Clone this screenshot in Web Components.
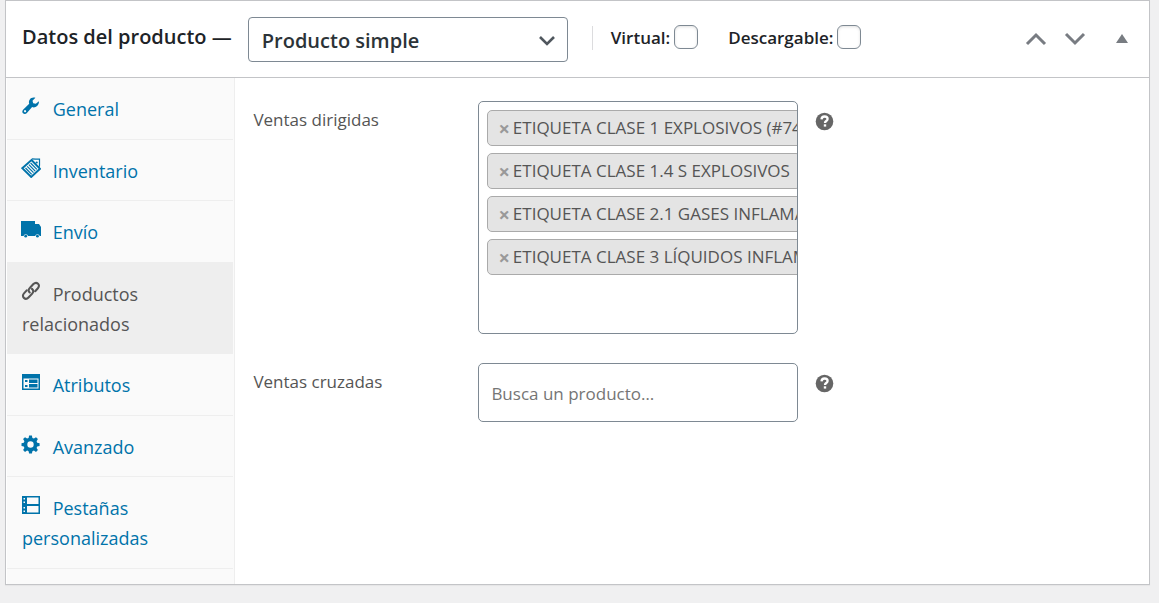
<!DOCTYPE html>
<html lang="es">
<head>
<meta charset="utf-8">
<meta name="viewport" content="width=device-width, initial-scale=1">
<title>Datos del producto</title>
<style>
    body {
        margin: 0;
        background: #f0f0f1;
        color: #1d2327;
        font-family: "Open Sans", "Noto Sans", sans-serif;
    }
</style>
</head>
<body>
<product-data>
    <product-header slot="header"></product-header>
    <product-tabs slot="tabs">
        <product-tab icon="wrench">General</product-tab>
        <product-tab icon="tag">Inventario</product-tab>
        <product-tab icon="truck">Envío</product-tab>
        <product-tab icon="link" active>Productos relacionados</product-tab>
        <product-tab icon="list">Atributos</product-tab>
        <product-tab icon="gear">Avanzado</product-tab>
        <product-tab icon="tabs">Pestañas personalizadas</product-tab>
    </product-tabs>
    <product-field label="Ventas dirigidas">
        <product-token>ETIQUETA CLASE 1 EXPLOSIVOS (#74)</product-token>
        <product-token>ETIQUETA CLASE 1.4 S EXPLOSIVOS</product-token>
        <product-token>ETIQUETA CLASE 2.1 GASES INFLAMABLES</product-token>
        <product-token>ETIQUETA CLASE 3 LÍQUIDOS INFLAMABLES</product-token>
    </product-field>
    <product-field label="Ventas cruzadas" placeholder="Busca un producto…"></product-field>
</product-data>

<script>
const icons = {
    wrench: `<path d="M17.9 5.2l-3.1 2.6-2.6-.6-.7-2.5 2.9-2.9c-2.3-.7-4.500 0-5.600 1.600-1 1.400-1.100 2.900-.6 4.300L2.300 13.400c-1.200 1.100-1.300 2.700-.3 3.800 1.100 1.100 2.800 1 3.900-.2l5.200-5.900c1.700.6 3.600.3 5-1.100 1.300-1.300 2.100-3 1.800-4.800zM4.900 15.900a1.100 1.100 0 1 1-1.500-1.600 1.100 1.100 0 0 1 1.500 1.600z" fill-rule="evenodd"/>`,
    tag: `<path d="M10.500 2L19 10.800 10.200 19 1.300 10.200z" fill="none" stroke="currentColor" stroke-width="1.900"/><path d="M4.500 10l6.200 6.300M6.200 8.300l6.300 6.400M7.900 6.600l6.300 6.500M9.600 5l6.300 6.400" stroke="currentColor" stroke-width="1.200" fill="none"/><path d="M10.800.8l3.700.4h4v6.300l-.7 2.500" fill="none" stroke="currentColor" stroke-width="1.200"/><circle cx="15.700" cy="4.500" r="1.100"/>`,
    truck: `<path d="M0 2h14v3h4l2 3v9h-1.300a2.300 2.300 0 0 0-4.500 0H7a2.300 2.300 0 0 0-4.500 0H0z"/><circle cx="4.700" cy="17.200" r="1.400"/><circle cx="16.400" cy="17.200" r="1.400"/>`,
    link: `<g fill="none" stroke="currentColor" stroke-width="2.100" stroke-linecap="round"><path d="M8.700 11.500c-1.700-1.500-1.200-3.300.1-4.600l3.600-3.800c3.200-3.100 7.600.8 4.500 4.100l-2.700 3"/><path d="M11 7.900c1.800 1.500 1.500 3.300.2 4.700l-3.700 3.900c-3.100 3.200-7.600-.8-4.500-4.100l2.700-3"/></g>`,
    list: `<path d="M1 2h18v16H1zm1.500 4.500v10h15v-10z" fill-rule="evenodd"/><path d="M4 8h2.500v2H4zm0 5h2.500v2H4zM8 7.500h8.500v3.500H8zm0 4.500h8.500v3.500H8z"/>`,
    gear: `<path d="M8.100 1.500h2.800l.5 2.400 1.500.6 2.100-1.300 1.900 1.900-1.300 2.100.6 1.500 2.400.5V12l-2.400.5-.6 1.500 1.300 2-1.900 2-2.100-1.400-1.500.6-.5 2.300H8.100l-.5-2.300-1.500-.6L4 18l-1.900-2 1.300-2-.6-1.500-2.300-.5V9.200l2.300-.5.6-1.500-1.300-2.100L4 3.200l2.100 1.300 1.500-.6zM9.500 7.300a3.200 3.200 0 1 0 0 6.400 3.200 3.200 0 0 0 0-6.400z" fill-rule="evenodd"/>`,
    tabs: `<path d="M1 1h18v18H1zm5 1.500V9h11.500V2.500zM6 11v6.500h11.500V11zM2.500 3v1.500H4V3zm0 3.500V8H4V6.500zm0 5.500v1.500H4V12zm0 3.500V17H4v-1.500z" fill-rule="evenodd"/>`
};

function attach(el, html) {
    const template = document.createElement('template');
    template.innerHTML = html;
    el.attachShadow({ mode: "open" });
    el.shadowRoot.appendChild(template.content.cloneNode(true));
}

class ProductData extends HTMLElement {
    constructor() {
        super();
        attach(this, `
            <style>
            :host {
                display: flex;
                box-sizing: border-box;
                min-height: 100vh;
                padding: 0 9px 18px 5px;
            }
            section {
                flex: 1;
                display: flex;
                flex-direction: column;
                min-width: 0;
                background: #fff;
                border: 1px solid #c3c4c7;
                box-shadow: 0 1px 1px rgba(0, 0, 0, .04);
            }
            .inside {
                flex: 1;
                display: flex;
                padding-left: 1px;
            }
            .fields {
                flex: 1;
                display: flex;
                flex-direction: column;
                gap: 29px;
                min-width: 0;
                padding: 23px 18px;
            }
            </style>
            <section>
                <slot name="header"></slot>
                <div class="inside">
                    <slot name="tabs"></slot>
                    <div class="fields"><slot></slot></div>
                </div>
            </section>
        `);
    }
}
customElements.define("product-data", ProductData);

class ProductHeader extends HTMLElement {
    constructor() {
        super();
        attach(this, `
            <style>
            :host {
                display: flex;
                align-items: center;
                box-sizing: border-box;
                padding: 16px 16px 15px;
                border-bottom: 1px solid #c3c4c7;
            }
            h2 {
                margin: 0 16px 0 0;
                font-size: 20px;
                line-height: 30px;
                padding-bottom: 6px;
                font-weight: 600;
                white-space: nowrap;
            }
            .type {
                display: grid;
                flex: 0 1 320px;
                align-items: center;
            }
            .type > * {
                grid-area: 1 / 1;
            }
            select {
                appearance: none;
                box-sizing: border-box;
                width: 100%;
                height: 45px;
                padding: 2px 40px 0 13px;
                border: 1px solid #7e8993;
                border-radius: 4px;
                background: #fff;
                color: #2c3338;
                font: 600 20px "Open Sans", "Noto Sans", sans-serif;
            }
            .type svg {
                justify-self: end;
                margin-right: 12px;
                pointer-events: none;
            }
            .options {
                display: flex;
                align-items: center;
                gap: 30px;
                height: 24px;
                margin: 0 auto 4px 24px;
                padding-left: 18px;
                border-left: 1px solid #dcdcde;
            }
            label {
                display: flex;
                align-items: center;
                gap: 4px;
                font-size: 17px;
                font-weight: 600;
                white-space: nowrap;
            }
            input {
                appearance: none;
                box-sizing: border-box;
                width: 24px;
                height: 24px;
                margin: 0 0 2px;
                border: 1px solid #7e8993;
                border-radius: 6px;
                background: #fff;
                box-shadow: inset 0 1px 3px rgba(0, 0, 0, .12);
            }
            .actions {
                display: flex;
                align-items: center;
                gap: 15px;
                padding-bottom: 2px;
            }
            button {
                display: flex;
                padding: 0;
                border: 0;
                background: none;
                color: #787c82;
            }
            .toggle {
                margin-left: 9px;
            }
            </style>
            <h2>Datos del producto —</h2>
            <div class="type">
                <select aria-label="Tipo de producto"><option>Producto simple</option></select>
                <svg width="18" height="18" viewBox="0 0 18 18"><path d="M2 6l7 7 7-7" fill="none" stroke="#50575e" stroke-width="2.600"/></svg>
            </div>
            <div class="options">
                <label>Virtual: <input type="checkbox"></label>
                <label>Descargable: <input type="checkbox"></label>
            </div>
            <div class="actions">
                <button type="button" aria-label="Subir"><svg width="24" height="24" viewBox="0 0 24 24"><path d="M3 17l9-9 9 9" fill="none" stroke="currentColor" stroke-width="3"/></svg></button>
                <button type="button" aria-label="Bajar"><svg width="24" height="24" viewBox="0 0 24 24"><path d="M3 7l9 9 9-9" fill="none" stroke="currentColor" stroke-width="3"/></svg></button>
                <button type="button" class="toggle" aria-label="Alternar panel"><svg width="22" height="24" viewBox="0 0 22 24"><path d="M11 7l6 9H5z" fill="currentColor"/></svg></button>
            </div>
        `);
    }
}
customElements.define("product-header", ProductHeader);

class ProductTabs extends HTMLElement {
    constructor() {
        super();
        attach(this, `
            <style>
            :host {
                display: flex;
                flex-direction: column;
                flex: 0 0 20%;
                box-sizing: border-box;
                padding: 0 1px 15px 0;
                background: #fafafa;
                border-right: 1px solid #eee;
            }
            </style>
            <slot></slot>
        `);
        this.setAttribute("role", "navigation");
    }
}
customElements.define("product-tabs", ProductTabs);

class ProductTab extends HTMLElement {
    constructor() {
        super();
        attach(this, `
            <style>
            :host {
                display: flex;
                flex: 1 1 auto;
                border-bottom: 1px solid #eee;
                color: #0073aa;
            }
            :host([active]) {
                background: #eee;
                color: #555;
            }
            a {
                flex: 1;
                padding: 16px 15px 14px;
                color: inherit;
                font-size: 18px;
                line-height: 30px;
                text-decoration: none;
            }
            svg {
                width: 20px;
                height: 20px;
                margin: 0 7px 0 -1px;
                fill: currentColor;
            }
            </style>
            <a href="#"><svg viewBox="0 0 20 20"></svg> <slot></slot></a>
        `);
    }

    connectedCallback() {
        this.shadowRoot.querySelector("svg").innerHTML = icons[this.getAttribute("icon")];
    }
}
customElements.define("product-tab", ProductTab);

class ProductToken extends HTMLElement {
    constructor() {
        super();
        attach(this, `
            <style>
            :host {
                display: flex;
                align-items: center;
                box-sizing: border-box;
                width: max-content;
                min-width: 100%;
                height: 36px;
                padding: 0 10px 1px;
                gap: 3px;
                border: 1px solid #aaa;
                border-radius: 5px;
                background: #e4e4e4;
                color: #555;
                font-size: 17px;
                white-space: nowrap;
            }
            button {
                padding: 2px 0 0;
                border: 0;
                background: none;
                color: #999;
                font: 700 20px "Open Sans", sans-serif;
            }
            </style>
            <button type="button" aria-label="Quitar">×</button>
            <span><slot></slot></span>
        `);
    }
}
customElements.define("product-token", ProductToken);

class ProductField extends HTMLElement {
    constructor() {
        super();
        attach(this, `
            <style>
            :host {
                display: grid;
                grid-template-columns: 225px minmax(0, 320px) auto;
                justify-content: start;
                align-items: start;
                color: #555;
                font-size: 17px;
            }
            label {
                padding-top: 7px;
                line-height: 24px;
            }
            .box {
                box-sizing: border-box;
                overflow: hidden;
                border: 1px solid #7e8993;
                border-radius: 5px;
                background: #fff;
            }
            .tokens {
                display: flex;
                flex-direction: column;
                gap: 7px;
                padding: 8px 8px 1px;
            }
            .tokens[hidden] {
                display: none;
            }
            input {
                display: block;
                box-sizing: border-box;
                width: 100%;
                height: 57px;
                padding: 1px 12px 0;
                border: 0;
                outline: 0;
                background: none;
                color: #555;
                font: 17px "Open Sans", "Noto Sans", sans-serif;
            }
            input::placeholder {
                color: #757575;
                opacity: 1;
            }
            .help {
                display: block;
                margin: 11px 0 0 17px;
            }
            </style>
            <label for="search"></label>
            <div class="box">
                <div class="tokens"><slot></slot></div>
                <input id="search" type="text">
            </div>
            <svg class="help" width="19" height="19" viewBox="0 0 19 19" role="img" aria-label="Ayuda">
                <circle cx="9.500" cy="9.500" r="8.800" fill="#666"/>
                <path d="M6.500 7.400c.1-2 1.300-2.900 3.100-2.900 1.900 0 3 1 3 2.400 0 2.100-2.600 2.100-2.600 4" fill="none" stroke="#fff" stroke-width="2.300"/>
                <path d="M8.800 12.300h2.400v2.300H8.800z" fill="#fff"/>
            </svg>
        `);
    }

    connectedCallback() {
        const root = this.shadowRoot;
        root.querySelector("label").textContent = this.getAttribute("label");
        root.querySelector("input").placeholder = this.getAttribute("placeholder") || "";
        root.querySelector(".tokens").hidden = !this.querySelector("product-token");
    }
}
customElements.define("product-field", ProductField);
</script>
</body>
</html>
